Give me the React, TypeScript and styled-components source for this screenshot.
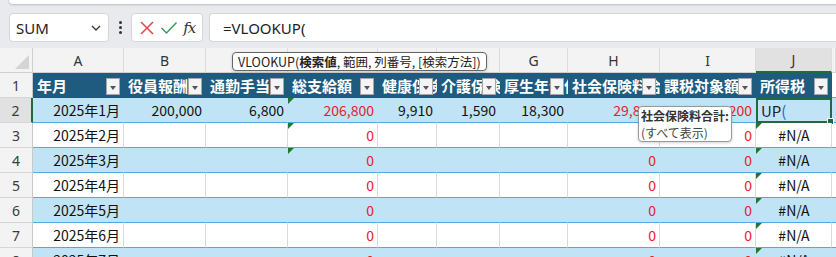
import styled, { createGlobalStyle } from "styled-components";

const GlobalStyle = createGlobalStyle`
  body {
    margin: 0;
    background: #e9eaed;
    font-family: "Noto Sans CJK JP", "Noto Sans", sans-serif;
    overflow: hidden;
  }
`;

const COLS = [33, 91, 82, 82, 90, 59, 63, 68, 92, 96, 76, 4];
const LETTERS = ["A", "B", "C", "D", "E", "F", "G", "H", "I", "J"];
const HEADERS = [
  "年月",
  "役員報酬",
  "通勤手当",
  "総支給額",
  "健康保険料",
  "介護保険料",
  "厚生年金保険料",
  "社会保険料合計",
  "課税対象額",
  "所得税",
];

type CellData = { text?: string; red?: boolean; flag?: boolean; align?: "left" | "right" | "center" };

const firstRow: CellData[] = [
  { text: "2025年1月", align: "right" },
  { text: "200,000", align: "right" },
  { text: "6,800", align: "right" },
  { text: "206,800", align: "right", red: true, flag: true },
  { text: "9,910", align: "right" },
  { text: "1,590", align: "right" },
  { text: "18,300", align: "right" },
  { text: "29,800", align: "right", red: true },
  { text: "177,200", align: "right", red: true },
];

const otherRows: CellData[][] = [2, 3, 4, 5, 6, 7].map((m, i) => [
  { text: `2025年${m}月`, align: "right" },
  {},
  {},
  { text: "0", align: "right", red: true, flag: i < 2 },
  {},
  {},
  {},
  { text: "0", align: "right", red: true },
  { text: "0", align: "right", red: true },
  { text: "#N/A", align: "center", flag: true },
]);

const RibbonEdge = styled.div`
  height: 4px;
  margin-left: 8px;
  background: #fdfdfd;
  border-bottom: 1px solid #c9c9cc;
  border-left: 1px solid #d4d4d7;
  border-bottom-left-radius: 8px;
  box-shadow: 0 1px 2px rgba(0, 0, 0, 0.08);
`;

const FormulaBar = styled.div`
  display: flex;
  align-items: center;
  height: 29px;
  margin-top: 8px;
  padding-left: 9px;
`;

const NameBox = styled.div`
  box-sizing: border-box;
  width: 100px;
  height: 29px;
  display: flex;
  align-items: center;
  justify-content: space-between;
  padding: 0 6px 0 6px;
  background: #fff;
  border: 1px solid #d6d6d9;
  border-radius: 4px;
  font-family: "Noto Sans", sans-serif;
  font-size: 15px;
  color: #222;
`;

const Dots = styled.div`
  width: 22px;
  display: flex;
  flex-direction: column;
  align-items: center;
  gap: 2px;
  span {
    width: 3px;
    height: 3px;
    border-radius: 50%;
    background: #333;
  }
`;

const ButtonBox = styled.div`
  box-sizing: border-box;
  width: 72px;
  height: 29px;
  display: flex;
  align-items: center;
  justify-content: space-around;
  padding: 0 4px;
  background: #fff;
  border: 1px solid #d6d6d9;
  border-radius: 4px;
`;

const Fx = styled.span`
  font-family: "DejaVu Serif", "Liberation Serif", serif;
  font-style: italic;
  font-size: 15px;
  color: #333;
  letter-spacing: -1px;
`;

const FormulaInput = styled.div`
  box-sizing: border-box;
  flex: 1;
  height: 29px;
  margin-left: 6px;
  padding-left: 13px;
  display: flex;
  align-items: center;
  background: #fff;
  border: 1px solid #d6d6d9;
  border-right: none;
  border-radius: 4px 0 0 4px;
  font-family: "Noto Sans", sans-serif;
  font-size: 15px;
  color: #222;
`;

const Sheet = styled.div`
  position: relative;
  margin-top: 6px;
  display: grid;
  grid-template-columns: ${COLS.map((c) => `${c}px`).join(" ")};
  grid-auto-rows: 25px;
  background: #fff;
`;

const Corner = styled.div`
  background: #f3f3f3;
  border-right: 1px solid #d0d0d0;
  border-bottom: 1px solid #d0d0d0;
  position: relative;
  &::after {
    content: "";
    position: absolute;
    right: 3px;
    bottom: 3px;
    border-style: solid;
    border-width: 0 0 14px 14px;
    border-color: transparent transparent #d4d4d4 transparent;
  }
`;

const ColHead = styled.div<{ $active?: boolean }>`
  box-sizing: border-box;
  display: flex;
  align-items: center;
  justify-content: center;
  background: ${(p) => (p.$active ? "#e1e1e1" : "#f3f3f3")};
  border-right: 1px solid #dcdcdc;
  border-bottom: ${(p) => (p.$active ? "2px solid #1e6b41" : "1px solid #d0d0d0")};
  font-family: "Noto Sans", sans-serif;
  font-size: 14px;
  color: #333;
`;

const RowHead = styled.div<{ $active?: boolean }>`
  box-sizing: border-box;
  display: flex;
  align-items: center;
  justify-content: center;
  background: ${(p) => (p.$active ? "#e1e1e1" : "#f3f3f3")};
  border-right: ${(p) => (p.$active ? "2px solid #1e6b41" : "1px solid #c8c8c8")};
  border-bottom: 1px solid #d6d6d6;
  font-family: "Noto Sans", sans-serif;
  font-size: 14px;
  color: #3a3a3a;
`;

const HeadCell = styled.div`
  box-sizing: border-box;
  position: relative;
  display: flex;
  align-items: center;
  padding-left: 4px;
  background: #1f5b7e;
  color: #fff;
  font-weight: 700;
  font-size: 15px;
  white-space: nowrap;
  overflow: hidden;
`;

const FilterButton = styled.span`
  position: absolute;
  right: 4px;
  top: 5px;
  box-sizing: border-box;
  width: 14px;
  height: 17px;
  background: #f4f4f4;
  border: 1px solid #a6a6a6;
  &::after {
    content: "";
    position: absolute;
    left: 3px;
    top: 7px;
    border-style: solid;
    border-width: 4px 3.5px 0 3.5px;
    border-color: #555 transparent transparent transparent;
  }
`;

const Cell = styled.div<{ $band: boolean; $align: string; $red?: boolean; $flag?: boolean }>`
  box-sizing: border-box;
  position: relative;
  display: flex;
  align-items: center;
  justify-content: ${(p) =>
    p.$align === "right" ? "flex-end" : p.$align === "center" ? "center" : "flex-start"};
  padding: 0 3px 0 4px;
  background: ${(p) => (p.$band ? "#c0e4f5" : "#fff")};
  border-bottom: 1px solid #52a9de;
  border-right: 1px solid ${(p) => (p.$band ? "#c0e4f5" : "#dadada")};
  font-size: 14px;
  color: ${(p) => (p.$red ? "#e8202a" : "#111")};
  white-space: nowrap;
  overflow: hidden;
  ${(p) =>
    p.$flag &&
    `&::before {
      content: "";
      position: absolute;
      left: 0;
      top: 0;
      border-style: solid;
      border-width: 6px 6px 0 0;
      border-color: #1e7a2c transparent transparent transparent;
    }`}
`;

const EditCell = styled.div`
  box-sizing: border-box;
  position: relative;
  display: flex;
  align-items: center;
  padding-left: 3px;
  background: #c0e4f5;
  border: 2px solid #1e6b41;
  font-size: 15px;
  color: #222;
  span {
    color: #2a63b8;
  }
  &::after {
    content: "";
    position: absolute;
    right: -4px;
    bottom: -4px;
    width: 5px;
    height: 5px;
    background: #1e6b41;
    border: 1px solid #fff;
  }
`;

const Filler = styled.div<{ $band?: boolean }>`
  background: ${(p) => (p.$band ? "#c0e4f5" : "#fff")};
  border-bottom: 1px solid #52a9de;
`;

const Tip = styled.div<{ $left: number; $top: number }>`
  position: absolute;
  left: ${(p) => p.$left}px;
  top: ${(p) => p.$top}px;
  box-sizing: border-box;
  padding: 0 5px;
  background: #fff;
  border: 1px solid #666;
  border-radius: 4px;
  box-shadow: 0 1px 3px rgba(0, 0, 0, 0.18);
  font-size: 12.5px;
  line-height: 17px;
  color: #222;
  white-space: nowrap;
  b {
    font-weight: 700;
  }
`;

const SubTip = styled(Tip)`
  padding: 0 2px;
  border-color: #999;
  font-size: 12px;
  color: #444;
  b {
    color: #333;
  }
`;

function Chevron() {
  return (
    <svg width="12" height="8" viewBox="0 0 12 8">
      <path d="M2 2 L6 6 L10 2" fill="none" stroke="#333" strokeWidth="1.3" />
    </svg>
  );
}

export default function App() {
  return (
    <>
      <GlobalStyle />
      <RibbonEdge />
      <FormulaBar>
        <NameBox>
          SUM
          <Chevron />
        </NameBox>
        <Dots>
          <span />
          <span />
          <span />
        </Dots>
        <ButtonBox>
          <svg width="16" height="16" viewBox="0 0 16 16">
            <path d="M2 2 L14 14 M14 2 L2 14" stroke="#e0454a" strokeWidth="1.5" />
          </svg>
          <svg width="18" height="16" viewBox="0 0 18 16">
            <path d="M1.5 8 L6.5 13 L16.5 2.5" fill="none" stroke="#3d9b58" strokeWidth="1.5" />
          </svg>
          <Fx>fx</Fx>
        </ButtonBox>
        <FormulaInput>=VLOOKUP(</FormulaInput>
      </FormulaBar>
      <Sheet>
        <Corner />
        {LETTERS.map((l) => (
          <ColHead key={l} $active={l === "J"}>
            {l}
          </ColHead>
        ))}
        <ColHead />

        <RowHead>1</RowHead>
        {HEADERS.map((h) => (
          <HeadCell key={h}>
            {h}
            <FilterButton />
          </HeadCell>
        ))}
        <Filler />

        <RowHead $active>2</RowHead>
        {firstRow.map((c, i) => (
          <Cell key={i} $band $align={c.align ?? "left"} $red={c.red} $flag={c.flag}>
            {c.text}
          </Cell>
        ))}
        <EditCell>
          UP<span>(</span>
        </EditCell>
        <Filler $band />

        {otherRows.map((row, r) => {
          const band = r % 2 === 1;
          return [
            <RowHead key={`h${r}`}>{r + 3}</RowHead>,
            ...row.map((c, i) => (
              <Cell
                key={`${r}-${i}`}
                $band={band}
                $align={c.align ?? "left"}
                $red={c.red}
                $flag={c.flag}
              >
                {c.text}
              </Cell>
            )),
            <Filler key={`f${r}`} $band={band} />,
          ];
        })}

        <Tip $left={232} $top={4}>
          VLOOKUP(<b>検索値</b>, 範囲, 列番号, [検索方法])
        </Tip>
        <SubTip $left={638} $top={58}>
          <b>社会保険料合計:</b>
          <br />
          (すべて表示)
        </SubTip>
      </Sheet>
    </>
  );
}
